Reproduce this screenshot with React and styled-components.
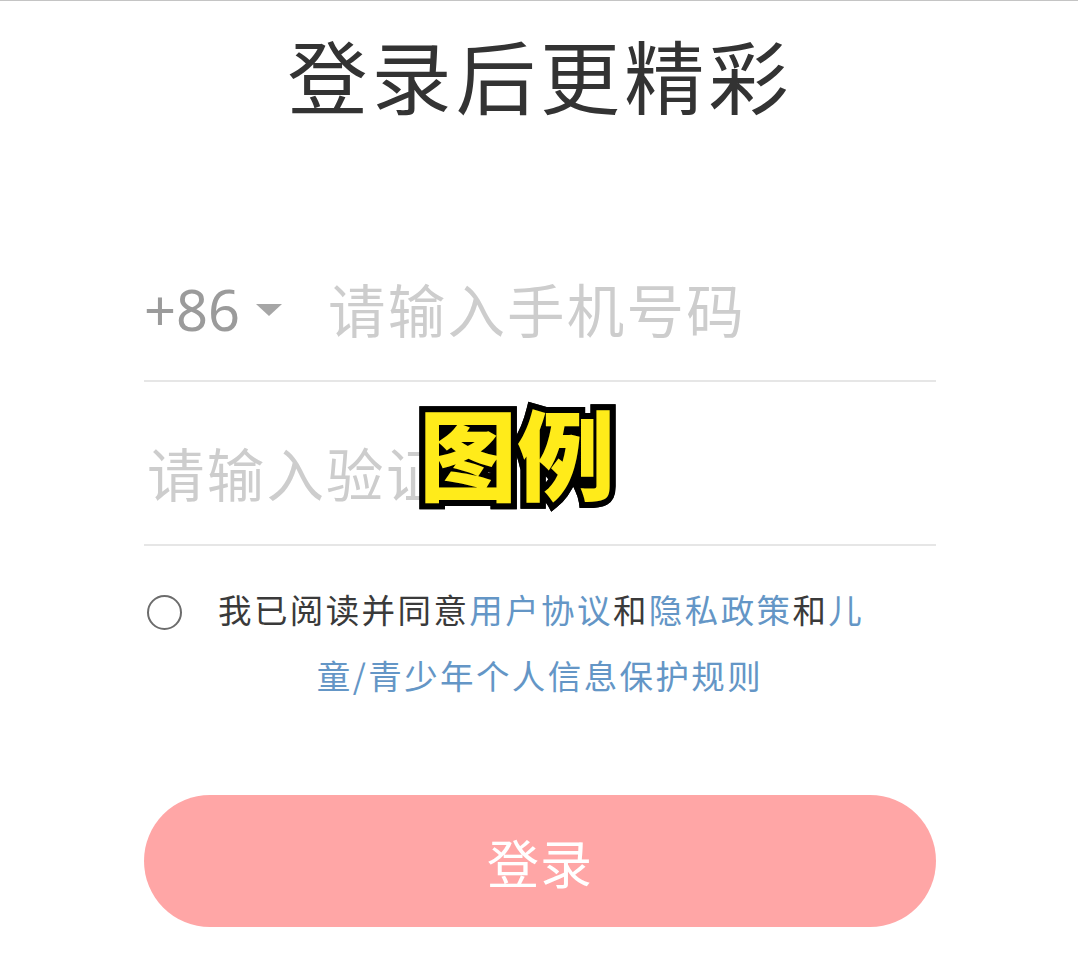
import React from 'react';
import styled, { createGlobalStyle } from 'styled-components';

const CJK = '"Noto Sans CJK SC", "Noto Sans", sans-serif';

const GlobalStyle = createGlobalStyle`
  html, body { margin: 0; padding: 0; background: #fff; }
  body { font-family: ${CJK}; }
`;

const Page = styled.div`
  position: relative;
  width: 1078px;
  height: 969px;
  box-sizing: border-box;
  border-top: 1px solid #c4c4c4;
  padding-left: 2px;
  overflow: hidden;
  display: flex;
  flex-direction: column;
  align-items: center;
`;

const Title = styled.h1`
  margin: 0;
  height: 217px;
  padding-top: 13px;
  box-sizing: border-box;
  font-size: 80px;
  line-height: 118px;
  letter-spacing: 4.2px;
  font-weight: 400;
  color: #333;
`;

const Form = styled.form`
  width: 792px;
  display: flex;
  flex-direction: column;
`;

const Row = styled.div`
  height: 164px;
  box-sizing: border-box;
  border-bottom: 2px solid #e6e6e6;
  display: flex;
  align-items: center;
  padding-top: 17px;
`;

const Prefix = styled.div`
  display: flex;
  align-items: center;
  width: 184px;
  flex: none;
  color: #9b9b9b;
  font-size: 56px;
  margin-top: 3px;
  font-family: "Noto Sans", sans-serif;
`;

const Caret = styled.span`
  width: 0;
  height: 0;
  margin-left: 16px;
  margin-top: 2px;
  border-left: 13.5px solid transparent;
  border-right: 13.5px solid transparent;
  border-top: 12px solid #a6a6a6;
`;

const Field = styled.input`
  flex: 1;
  min-width: 0;
  border: 0;
  outline: 0;
  padding: 0;
  margin-left: ${p => p.$indent || 0}px;
  background: transparent;
  font-family: ${CJK};
  font-size: 57.5px;
  letter-spacing: 2.2px;
  height: 84px;
  color: #333;
  &::placeholder { color: #cdcdcd; opacity: 1; }
`;

const Agreement = styled.div`
  margin: 30px 0 87px;
  font-size: 33.5px;
  letter-spacing: 2.4px;
  line-height: 66px;
  color: #3a3a3a;
`;

const FirstLine = styled.div`
  display: flex;
  align-items: center;
  padding-left: 3px;
`;

const SecondLine = styled.div`
  text-align: center;
`;

const Radio = styled.span`
  flex: none;
  width: 31px;
  height: 31px;
  border: 2px solid #6c6c6c;
  border-radius: 50%;
  margin-top: 6px;
  margin-right: 36px;
`;

const Link = styled.a`
  color: #6496c6;
`;

const Submit = styled.button`
  height: 132px;
  border: 0;
  border-radius: 66px;
  background: #ffa6a6;
  color: #fff;
  font-family: ${CJK};
  font-size: 52px;
  letter-spacing: 1px;
  padding: 0;
`;

const Stamp = styled.div`
  position: absolute;
  left: 419px;
  top: 387px;
  display: flex;
  font-size: 98px;
  line-height: 124px;
  font-weight: 900;
  color: #ffeb1a;
  -webkit-text-stroke: 12px #000;
  paint-order: stroke fill;
  filter: drop-shadow(0 0 0.5px #000);
`;

export default function App() {
  return (
    <Page>
      <GlobalStyle />
      <Title>登录后更精彩</Title>
      <Form>
        <Row>
          <Prefix>+86<Caret /></Prefix>
          <Field placeholder="请输入手机号码" />
        </Row>
        <Row>
          <Field $indent={3} placeholder="请输入验证码" />
        </Row>
        <Agreement>
          <FirstLine>
            <Radio />
            <span>我已阅读并同意</span><Link>用户协议</Link><span>和</span><Link>隐私政策</Link><span>和</span><Link>儿</Link>
          </FirstLine>
          <SecondLine>
            <Link>童/青少年个人信息保护规则</Link>
          </SecondLine>
        </Agreement>
        <Submit type="button">登录</Submit>
      </Form>
      <Stamp>图例</Stamp>
    </Page>
  );
}
